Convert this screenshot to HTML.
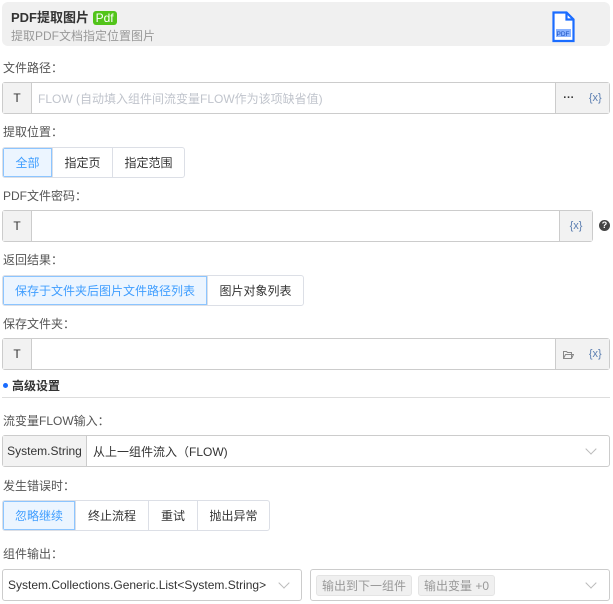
<!DOCTYPE html>
<html><head><meta charset="utf-8"><style>
*{box-sizing:border-box;margin:0;padding:0}
body{width:613px;height:604px;background:#fff;font-family:"Liberation Sans","Noto Sans CJK SC",sans-serif;font-size:12px;color:#333;position:relative;overflow:hidden}
.a{position:absolute}
.lbl{position:absolute;left:3px;font-size:12px;color:#555}
.inp{position:absolute;border:1px solid #ccc;border-radius:3px;background:#fff;display:flex;align-items:center}
.t{width:29px;height:100%;background:#f2f2f2;border-right:1px solid #ccc;display:flex;align-items:center;justify-content:center;color:#333;font-size:12px}
.rg{position:absolute;display:flex;height:31px;border:1px solid #dcdfe6;border-radius:3px;overflow:hidden}
.rg div{display:flex;align-items:center;justify-content:center;border-left:1px solid #dcdfe6;color:#333;font-size:12px}
.rg div:first-child{border-left:none}
.rg .on{background:#ecf5ff;color:#409eff;box-shadow:inset 0 0 0 1px #8cc5ff}
.x{color:#5a7db0;font-size:11px}
.chev{position:absolute;width:8px;height:8px;border-right:1px solid #bbb;border-bottom:1px solid #bbb;transform:rotate(45deg)}
.tag{background:#f0f0f0;border:1px solid #e4e4e4;border-radius:3px;color:#999;padding:1px 5px;margin-right:6px;font-size:12px}
</style></head><body>
<div class="a" style="left:2px;top:2px;width:608px;height:44px;background:#f0f0f0;border-radius:6px"></div>
<div class="a" style="left:11px;top:7px;font-size:13px;font-weight:bold;color:#333">PDF提取图片 <span style="background:#52c41a;color:#fff;font-weight:normal;border-radius:3px;padding:0 3px;font-size:12px">Pdf</span></div>
<div class="a" style="left:11px;top:27px;font-size:12px;color:#999">提取PDF文档指定位置图片</div>
<svg class="a" style="left:551px;top:11px" width="28" height="32" viewBox="0 0 28 32"><path d="M2.5 1.5h13l7 7v21.5h-20z" fill="#fff" stroke="#1a6cff" stroke-width="2.2"/><path d="M15.5 1.5v7h7" fill="none" stroke="#1a6cff" stroke-width="2.2"/><rect x="5" y="18" width="15" height="8" fill="#8ab3ff"/><text x="5.5" y="25" font-size="6.5" fill="#1a50c0" font-family="Liberation Sans">PDF</text></svg>

<div class="lbl" style="top:59px">文件路径：</div>
<div class="inp" style="left:2px;top:82px;width:608px;height:32px"><div class="t">T</div><span style="margin-left:6px;color:#c0c4cc;flex:1">FLOW (自动填入组件间流变量FLOW作为该项缺省值)</span><div style="width:54px;height:100%;background:#f2f2f2;border-left:1px solid #ccc;display:flex;align-items:center;justify-content:space-around"><b style="font-size:11px;color:#333">···</b><span class="x">{x}</span></div></div>

<div class="lbl" style="top:123px">提取位置：</div>
<div class="rg" style="left:2px;top:147px"><div class="on" style="width:49px">全部</div><div style="width:60px">指定页</div><div style="width:72px">指定范围</div></div>

<div class="lbl" style="top:187px">PDF文件密码：</div>
<div class="inp" style="left:2px;top:210px;width:591px;height:32px"><div class="t">T</div><span style="flex:1"></span><div style="width:33px;height:100%;background:#f2f2f2;border-left:1px solid #ccc;display:flex;align-items:center;justify-content:center"><span class="x">{x}</span></div></div>
<div class="a" style="left:599px;top:220px;width:11px;height:11px;border-radius:50%;background:#444;color:#fff;font-size:9px;font-weight:bold;text-align:center;line-height:11px">?</div>

<div class="lbl" style="top:251px">返回结果：</div>
<div class="rg" style="left:2px;top:275px"><div class="on" style="width:204px">保存于文件夹后图片文件路径列表</div><div style="width:96px">图片对象列表</div></div>

<div class="lbl" style="top:315px">保存文件夹：</div>
<div class="inp" style="left:2px;top:338px;width:608px;height:32px"><div class="t">T</div><span style="flex:1"></span><div style="width:54px;height:100%;background:#f2f2f2;border-left:1px solid #ccc;display:flex;align-items:center;justify-content:space-around"><svg width="11" height="9" viewBox="0 0 11 9"><path d="M.5 1.5h3l1 1h4v6h-8z M.5 8.5l2-4h8l-2 4" fill="none" stroke="#888"/></svg><span class="x">{x}</span></div></div>

<div class="a" style="left:3px;top:383px;width:5px;height:5px;border-radius:50%;background:#1a6cff"></div>
<div class="a" style="left:12px;top:377px;font-size:12px;font-weight:bold;color:#333">高级设置</div>
<div class="a" style="left:2px;top:397px;width:608px;height:1px;background:#ddd"></div>

<div class="lbl" style="top:412px">流变量FLOW输入：</div>
<div class="inp" style="left:2px;top:435px;width:608px;height:32px"><div class="t" style="width:84px">System.String</div><span style="margin-left:6px;color:#333">从上一组件流入（FLOW)</span></div>
<div class="chev" style="left:587px;top:445px"></div>

<div class="lbl" style="top:477px">发生错误时：</div>
<div class="rg" style="left:2px;top:500px"><div class="on" style="width:72px">忽略继续</div><div style="width:73px">终止流程</div><div style="width:49px">重试</div><div style="width:72px">抛出异常</div></div>

<div class="lbl" style="top:545px">组件输出：</div>
<div class="inp" style="left:2px;top:569px;width:300px;height:32px"><span style="margin-left:5px;color:#333">System.Collections.Generic.List&lt;System.String&gt;</span></div>
<div class="chev" style="left:280px;top:579px"></div>
<div class="inp" style="left:310px;top:569px;width:300px;height:32px;padding-left:5px"><span class="tag">输出到下一组件</span><span class="tag">输出变量 +0</span></div>
<div class="chev" style="left:587px;top:579px"></div>
</body></html>
